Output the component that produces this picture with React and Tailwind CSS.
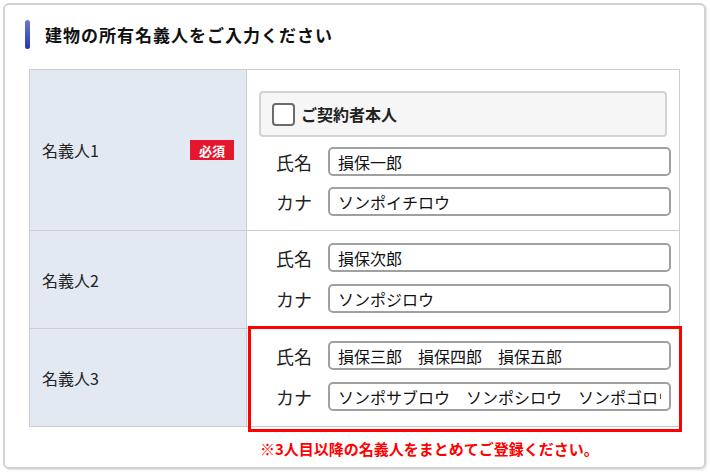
import { useState } from 'react';

const font = { fontFamily: '"Noto Sans CJK JP", "Noto Sans", sans-serif' };

const Field = ({ label, value }) => (
  <div className="flex items-center">
    <span className="w-[52px] text-[18px] leading-none text-[#222]">{label}</span>
    <input
      readOnly
      defaultValue={value}
      className="h-[29px] flex-1 min-w-0 rounded-[5px] border-2 border-[#a0a0a0] bg-white pl-[8px] pr-[8px] text-[16px] text-[#111] outline-none"
    />
  </div>
);

const OwnerLabel = ({ children, required }) => (
  <div className="flex items-center justify-between border-r border-[#cccccc] bg-[#e3e9f2] pl-[12px] pr-[12px]">
    <span className="text-[16px] text-[#222]">{children}</span>
    {required && (
      <span className="flex h-[20px] w-[44px] items-center justify-center bg-[#e5172f] text-[13px] font-bold leading-none text-white">
        必須
      </span>
    )}
  </div>
);

export default function App() {
  const [self, setSelf] = useState(false);

  return (
    <div className="h-[472px] w-[710px] bg-white p-[3px]" style={font}>
      <div className="h-[466px] w-[703px] rounded-[6px] border-2 border-[#d2d2d2] pl-[20px] pt-[15px] shadow-[1px_1px_2px_rgba(0,0,0,0.12)]">
        <div className="flex items-center">
          <div className="h-[29px] w-[5px] rounded-[3px] bg-gradient-to-b from-[#6e78cb] to-[#2637a8]" />
          <h2 className="ml-[15px] text-[17px] font-bold tracking-[1px] text-[#111]">
            建物の所有名義人をご入力ください
          </h2>
        </div>

        <div className="ml-[4px] mt-[20px] w-[651px] border border-[#cccccc]">
          {/* 名義人1 */}
          <div className="grid h-[161px] grid-cols-[217px_1fr] border-b border-[#cccccc]">
            <OwnerLabel required>名義人1</OwnerLabel>
            <div className="pr-[8px] pt-[21px]">
              <label className="mb-[10px] ml-[12px] mr-[4px] flex h-[46px] cursor-pointer items-center rounded-[4px] border-2 border-[#d3d3d3] bg-[#f6f6f6] pl-[11px]">
                <span
                  onClick={() => setSelf(!self)}
                  className="h-[23px] w-[23px] rounded-[4px] border-2 border-[#6b6b6b] bg-white"
                />
                <span className="ml-[6px] text-[16px] font-bold text-[#222]">ご契約者本人</span>
              </label>
              <div className="flex flex-col gap-[11px] pl-[29px]">
                <Field label="氏名" value="損保一郎" />
                <Field label="カナ" value="ソンポイチロウ" />
              </div>
            </div>
          </div>

          {/* 名義人2 */}
          <div className="grid h-[98px] grid-cols-[217px_1fr] border-b border-[#cccccc]">
            <OwnerLabel>名義人2</OwnerLabel>
            <div className="flex flex-col gap-[12px] pl-[29px] pr-[8px] pt-[12px]">
              <Field label="氏名" value="損保次郎" />
              <Field label="カナ" value="ソンポジロウ" />
            </div>
          </div>

          {/* 名義人3 */}
          <div className="grid h-[97px] grid-cols-[217px_1fr]">
            <OwnerLabel>名義人3</OwnerLabel>
            <div className="relative flex flex-col gap-[12px] pl-[29px] pr-[8px] pt-[12px]">
              <Field label="氏名" value="損保三郎　損保四郎　損保五郎" />
              <Field label="カナ" value="ソンポサブロウ　ソンポシロウ　ソンポゴロウ" />
              <div className="pointer-events-none absolute -bottom-[6px] -right-[3px] -top-[3px] left-[1px] border-[3px] border-[#ff0000]" />
            </div>
          </div>
        </div>

        <p className="ml-[235px] mt-[14px] text-[15px] font-bold leading-none text-[#ff0000]">
          ※3人目以降の名義人をまとめてご登録ください。
        </p>
      </div>
    </div>
  );
}
